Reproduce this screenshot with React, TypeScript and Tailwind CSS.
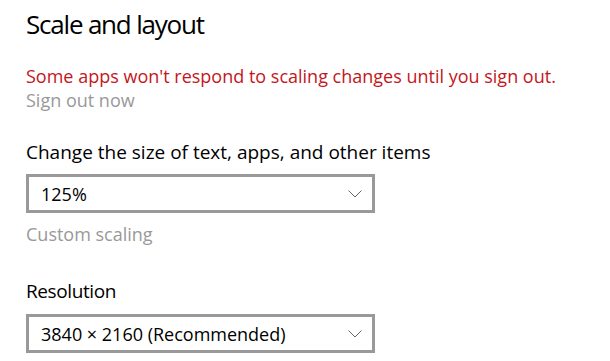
import React from "react";

const font = { fontFamily: '"Open Sans", "Noto Sans", sans-serif' };

function Chevron() {
  return (
    <svg width="14" height="8" viewBox="0 0 14 8" fill="none" className="shrink-0">
      <path d="M0.5 0.5 L7 7 L13.5 0.5" stroke="#666" strokeWidth="1" />
    </svg>
  );
}

function Select({ value }: { value: string }) {
  return (
    <div className="w-[349px] h-[39px] border-[3px] border-[#999999] bg-white flex flex-row items-center justify-between pl-[12px] pr-[10px]">
      <span className="text-[18px] leading-[24px] text-black">{value}</span>
      <Chevron />
    </div>
  );
}

export default function App() {
  return (
    <div className="w-[610px] h-[361px] bg-white overflow-hidden pl-[26px]" style={font}>
      <div className="flex flex-col">
        <h1 className="mt-[6px] text-[26px] leading-[36px] font-normal text-black tracking-[-1.2px]">
          Scale and layout
        </h1>
        <p className="mt-[22px] text-[18px] leading-[24px] text-[#c4161c]">
          Some apps won't respond to scaling changes until you sign out.
        </p>
        <a className="text-[18px] leading-[24px] text-[#999999]">Sign out now</a>

        <label className="mt-[28px] text-[19px] leading-[24px] text-black">
          Change the size of text, apps, and other items
        </label>
        <div className="mt-[10px]">
          <Select value="125%" />
        </div>
        <a className="mt-[9px] text-[18px] leading-[24px] text-[#999999]">Custom scaling</a>

        <label className="mt-[33px] text-[19px] leading-[24px] text-black tracking-[-0.4px]">Resolution</label>
        <div className="mt-[11px]">
          <Select value="3840 × 2160 (Recommended)" />
        </div>
      </div>
    </div>
  );
}
